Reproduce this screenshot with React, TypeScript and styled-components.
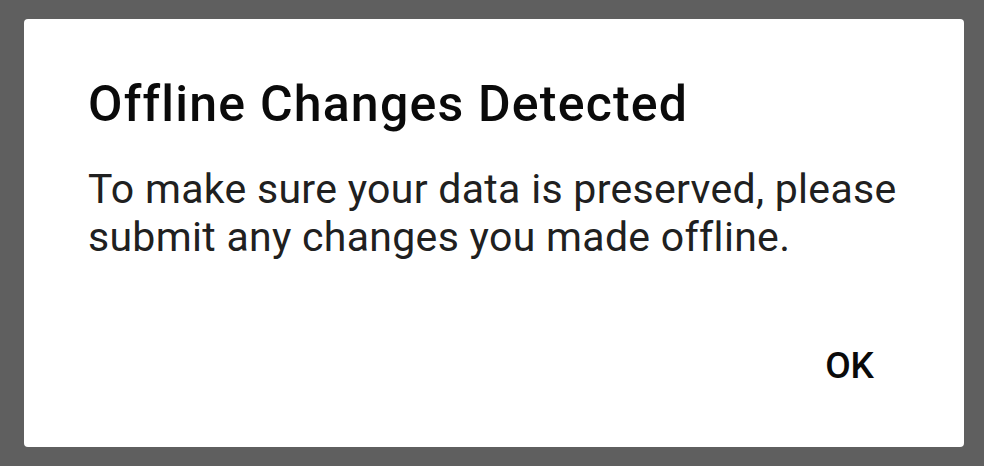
import React from "react";
import styled, { createGlobalStyle } from "styled-components";

const GlobalStyle = createGlobalStyle`
  html, body {
    margin: 0;
    padding: 0;
    background: #5f5f5f;
  }
  body {
    width: 984px;
    height: 466px;
    overflow: hidden;
    font-family: Roboto, "Noto Sans", sans-serif;
  }
`;

const App: React.FC = () => {
  return (
    <>
      <GlobalStyle />
      <Backdrop>
        <Dialog>
          <Title>Offline Changes Detected</Title>
          <Message>
            To make sure your data is preserved, please
            <br />
            submit any changes you made offline.
          </Message>
          <Actions>
            <ActionButton>OK</ActionButton>
          </Actions>
        </Dialog>
      </Backdrop>
    </>
  );
};
export default App;

const Backdrop = styled.div`
  width: 984px;
  height: 466px;
  padding: 19px 20px 19px 24px;
  box-sizing: border-box;
  display: flex;
`;

const Dialog = styled.div`
  flex: 1;
  background: #ffffff;
  border-radius: 4px;
  display: flex;
  flex-direction: column;
  padding: 57px 38px 0 64px;
  box-sizing: border-box;
`;

const Title = styled.h1`
  margin: 0;
  font-size: 50px;
  font-weight: 500;
  letter-spacing: 1.2px;
  line-height: 56px;
  color: #0a0a0a;
  white-space: nowrap;
`;

const Message = styled.p`
  margin: 33px 0 0 0;
  font-size: 41px;
  font-weight: 400;
  letter-spacing: 0.3px;
  line-height: 48px;
  color: #202020;
  white-space: nowrap;
`;

const Actions = styled.div`
  display: flex;
  justify-content: flex-end;
  margin-top: auto;
  padding: 0 0 59px 0;
`;

const ActionButton = styled.button`
  background: none;
  border: none;
  padding: 0;
  margin-right: 52px;
  font-family: Roboto, "Noto Sans", sans-serif;
  font-size: 37px;
  font-weight: 500;
  line-height: 44px;
  color: #0a0a0a;
  cursor: pointer;
`;
